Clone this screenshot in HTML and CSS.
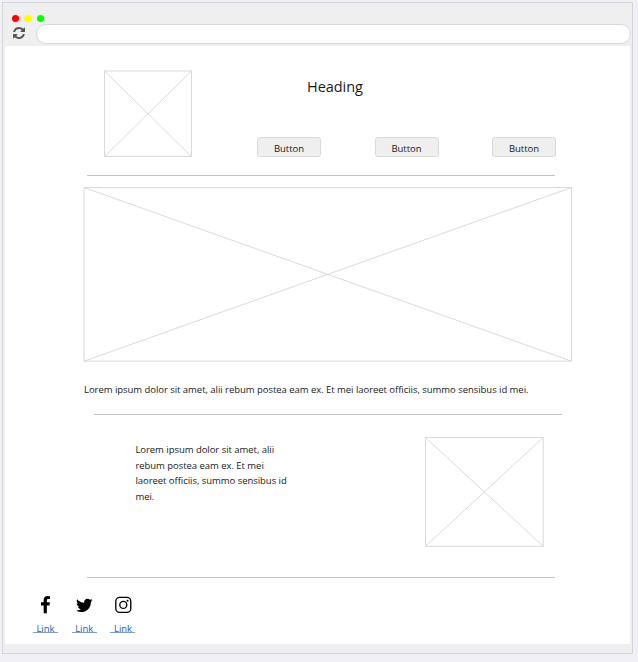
FILE: index.html
```html
<!DOCTYPE html>
<html lang="en">
<head>
<meta charset="utf-8">
<title>Wireframe</title>
<link rel="stylesheet" href="styles.css">
</head>
<body>
<div class="window">
  <header class="toolbar">
    <div class="dots"><span class="dot red"></span><span class="dot yellow"></span><span class="dot green"></span></div>
    <div class="address-row">
      <svg class="refresh" viewBox="0 0 1792 1792"><path d="M1639 1056q0 5-1 7-64 268-268 434.500t-478 166.500q-146 0-282.500-55t-243.500-157l-129 129q-19 19-45 19t-45-19-19-45v-448q0-26 19-45t45-19h448q26 0 45 19t19 45-19 45l-137 137q71 66 161 102t187 36q134 0 250-65t186-179q11-17 53-117 8-23 30-23h192q13 0 22.500 9.500t9.500 22.500zm25-800v448q0 26-19 45t-45 19h-448q-26 0-45-19t-19-45 19-45l138-138q-148-137-349-137-134 0-250 65t-186 179q-11 17-53 117-8 23-30 23h-199q-13 0-22.500-9.500t-9.500-22.500v-7q65-268 270-434.500t480-166.500q146 0 284 55.500t245 156.500l130-129q19-19 45-19t45 19 19 45z"/></svg>
      <div class="address"></div>
    </div>
  </header>
  <main class="page">
    <section class="intro">
      <svg class="image logo" viewBox="0 0 88 87"><path d="M.5 1h87v85.500H.5zL87.500 86.500M87.500 1L.5 86.500"/></svg>
      <div class="intro-main">
        <h1>Heading</h1>
        <nav class="buttons"><button>Button</button><button>Button</button><button>Button</button></nav>
      </div>
    </section>
    <hr class="rule">
    <svg class="image banner" viewBox="0 0 489 175"><path d="M1 .5h487.500v173.700H1zL488.500 174.200M488.500.5L1 174.200"/></svg>
    <p class="lead">Lorem ipsum dolor sit amet, alii rebum postea eam ex. Et mei laoreet officiis, summo sensibus id mei.</p>
    <hr class="rule rule-inset">
    <section class="feature">
      <p class="copy">Lorem ipsum dolor sit amet, alii<br>rebum postea eam ex. Et mei<br>laoreet officiis, summo sensibus id<br>mei.</p>
      <svg class="image picture" viewBox="0 0 120 110"><path d="M1.500 .5h117.700v108.800H1.500zL119.200 109.300M119.200.5L1.500 109.300"/></svg>
    </section>
    <hr class="rule rule-last">
    <footer class="social">
      <div class="social-item">
        <svg class="icon" viewBox="0 0 1792 1792"><path d="M1343 12v264h-157q-86 0-116 36t-30 108v189h293l-39 296h-254v759h-306v-759h-255v-296h255v-218q0-186 104-288.500t277-102.500q147 0 228 12z"/></svg>
        <a class="link">Link</a>
      </div>
      <div class="social-item">
        <svg class="icon" viewBox="0 0 1792 1792"><path d="M1684 408q-67 98-162 167 1 14 1 42 0 130-38 259.500t-115.500 248.500-184.500 210.500-258 146-323 54.500q-271 0-496-145 35 4 78 4 225 0 401-138-105-2-188-64.500t-114-159.500q33 5 61 5 43 0 85-11-112-23-185.500-111.500t-73.500-205.500v-4q68 38 146 41-66-44-105-115t-39-154q0-88 44-163 121 149 294.500 238.500t371.500 99.500q-8-38-8-74 0-134 94.500-228.500t228.500-94.500q140 0 236 102 109-21 205-78-37 115-142 178 93-10 186-50z"/></svg>
        <a class="link">Link</a>
      </div>
      <div class="social-item">
        <svg class="icon" viewBox="0 0 18.700 18.700"><g class="outline"><rect x="1.800" y="1.400" width="15" height="15" rx="4"/><circle cx="9.300" cy="8.900" r="3.500"/></g><circle cx="13.600" cy="4.700" r="1"/></svg>
        <a class="link">Link</a>
      </div>
    </footer>
  </main>
</div>
</body>
</html>
```

FILE: styles.css
```css
* { box-sizing: border-box; }

body {
  margin: 0;
  padding: 2px 0 0 2px;
  height: 662px;
  overflow: hidden;
  background: #f0f0f5;
  color: #1a1a1a;
  font-family: "Open Sans", "Noto Sans", sans-serif;
  font-size: 9.5px;
  letter-spacing: -0.04px;
}

.window {
  width: 631px;
  height: 652px;
  padding: 0 2px;
  border: 1px solid #d5d6d9;
  background: #efefef;
}

.toolbar { height: 43px; padding: 11.700px 0 0 6.500px; }

.dots { display: flex; gap: 5px; height: 8px; }
.dot { width: 7.600px; height: 7.600px; border-radius: 50%; }
.red { background: #f00; }
.yellow { background: #ff0; }
.green { background: #0f0; }

.address-row { display: flex; align-items: center; gap: 10.500px; margin-top: 1.300px; }
.refresh { width: 14px; height: 14px; flex: none; fill: #555; margin-top: -1.500px; }
.address {
  flex: 1;
  height: 20px;
  margin-right: -1px;
  border: 1px solid #d8d8d8;
  border-radius: 10px;
  background: #fff;
}

.page { height: 598px; background: #fff; padding: 24px 0 0; }

.image { display: block; fill: none; stroke: #d9d9d9; stroke-width: 1; }

.intro { display: flex; margin-left: 99px; }
.logo { width: 88px; height: 87px; }
.intro-main { width: 299px; margin-left: 65px; }
h1 {
  margin: 6px 0 0 50px;
  font-size: 14.500px;
  line-height: 22px;
  font-weight: 400;
}
.buttons { display: flex; justify-content: space-between; margin-top: 39px; }
button {
  width: 64px;
  height: 20px;
  padding: 3px 0 0;
  border: 1px solid #d9d9d9;
  border-radius: 3px;
  background: #efefef;
  color: #1a1a1a;
  font: inherit;
  letter-spacing: inherit;
  line-height: 16px;
}

.rule {
  width: 468px;
  height: 1px;
  margin: 18px 0 0 82px;
  border: 0;
  background: #c4c4c4;
}
.banner { width: 489px; height: 175px; margin: 11px 0 0 78px; }
.lead { margin: 20px 0 0 79px; line-height: 16px; white-space: nowrap; }
.rule-inset { margin: 16px 0 0 89px; }

.feature { display: flex; margin: 22px 0 0 130.400px; }
.copy { width: 160px; margin: 5px 128.600px 0 0; line-height: 15.700px; white-space: nowrap; }
.picture { width: 120px; height: 110px; }
.rule-last { margin-top: 30px; }

.social { display: flex; gap: 13px; margin: 18px 0 0 27.500px; }
.social-item { width: 25.800px; display: flex; flex-direction: column; align-items: center; }
.icon { width: 18.700px; height: 18.700px; fill: #000; }
.outline { fill: none; stroke: #000; stroke-width: 1.350; }
.link {
  width: 25px;
  height: 12px;
  margin-top: 6px;
  border-bottom: 1px solid #7e9fc9;
  color: #2862a8;
  line-height: 16px;
  text-align: center;
}
```
